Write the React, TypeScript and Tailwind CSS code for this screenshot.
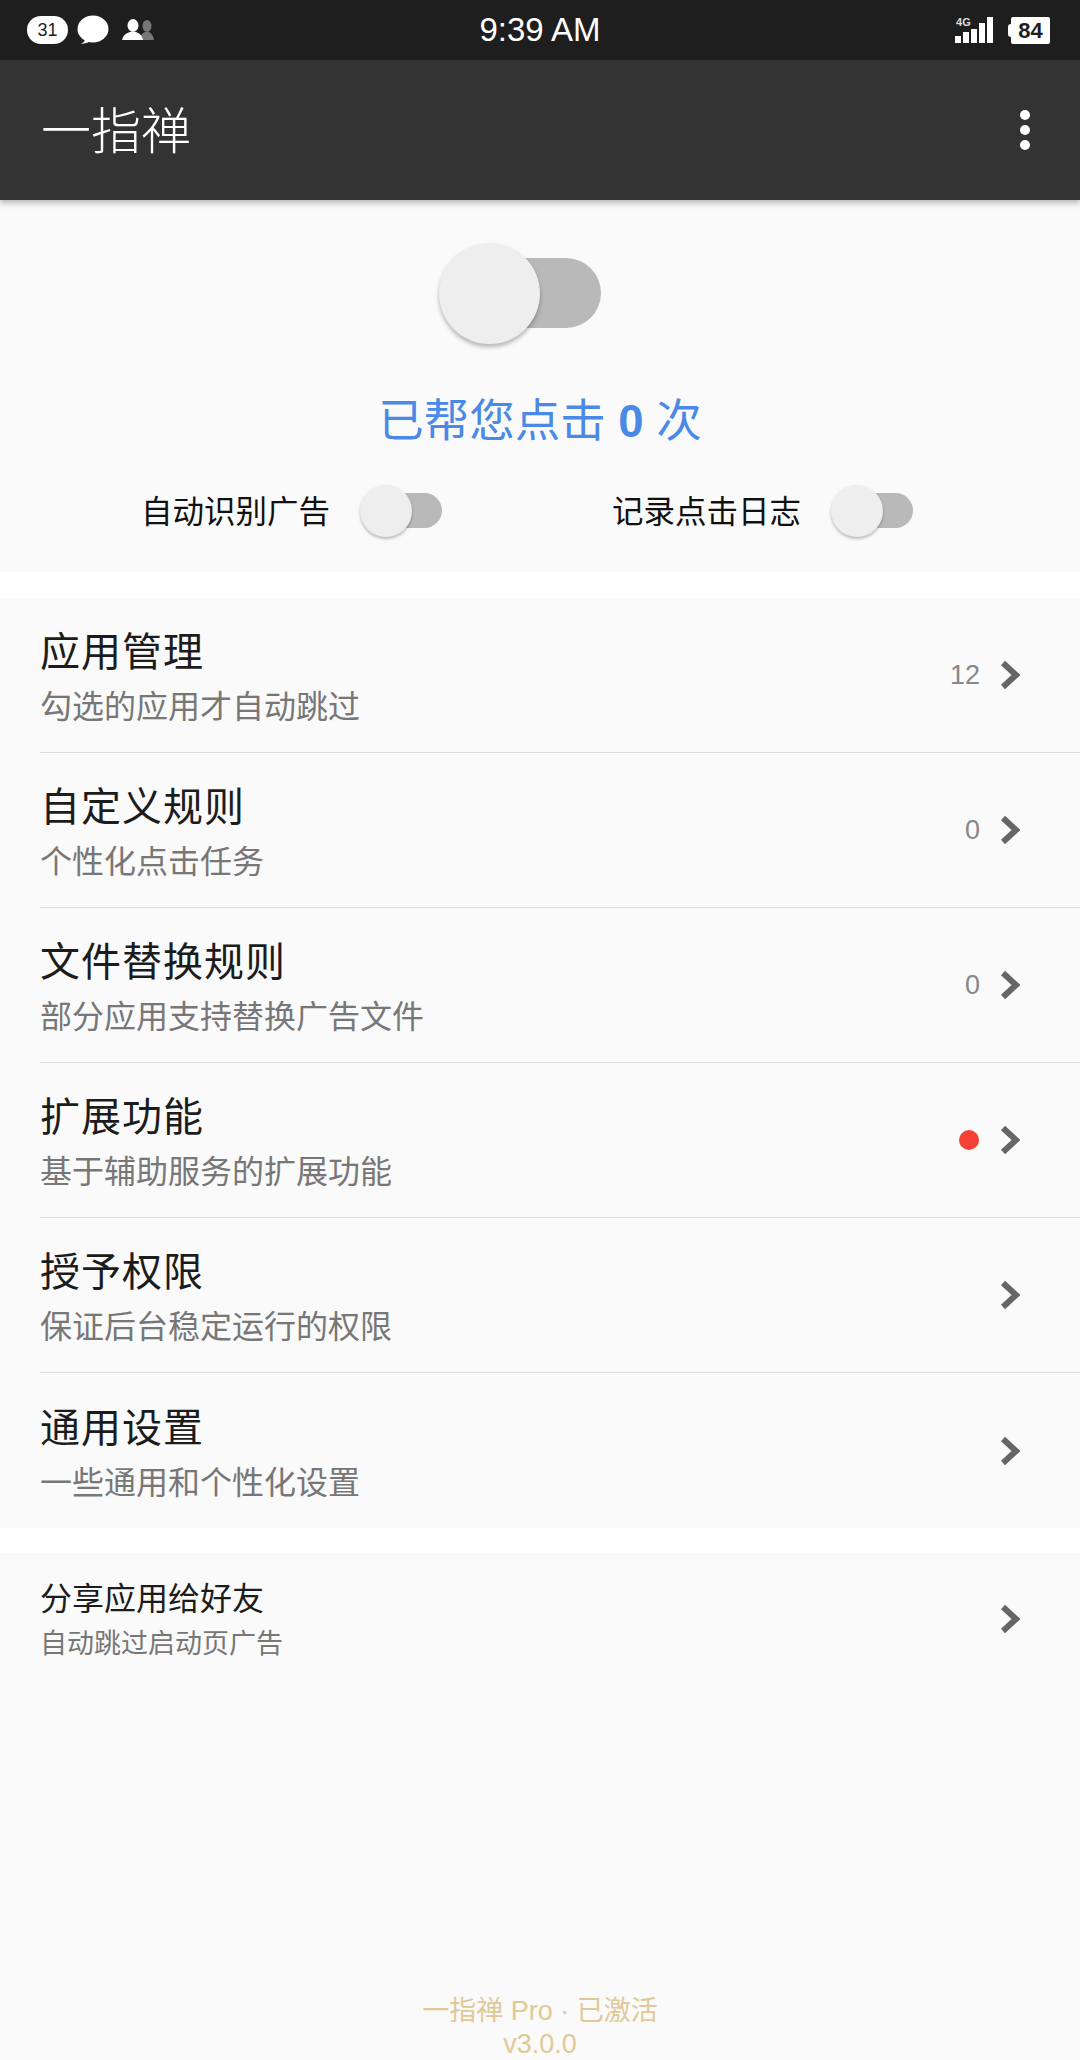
const FONT = "font-['Liberation_Sans','Noto_Sans_CJK_SC',sans-serif]";

const Chevron = () => (
  <svg width="20" height="30" viewBox="0 0 20 30" className="shrink-0">
    <path d="M3 3 L16 15 L3 27" fill="none" stroke="#666666" strokeWidth="6" />
  </svg>
);

const Toggle = ({ big }: { big?: boolean }) => (
  <div className={big ? "relative w-[121px] h-[70px] rounded-full bg-[#b9b9b9]" : "relative w-[60px] h-[35px] rounded-full bg-[#b9b9b9]"}>
    <div
      className={
        big
          ? "absolute -left-[41px] -top-[15px] w-[101px] h-[101px] rounded-full bg-[#eeeeee] shadow-[0_3px_4px_rgba(0,0,0,0.28)]"
          : "absolute -left-[22px] -top-[8px] w-[52px] h-[52px] rounded-full bg-[#eeeeee] shadow-[0_2px_3px_rgba(0,0,0,0.25)]"
      }
    />
  </div>
);

const StatusBar = () => (
  <div className="flex items-center h-[60px] bg-[#1e1e1e] px-[27px] text-white">
    <div className="flex-1 flex items-center">
      <div className="w-[41px] h-[28px] rounded-full bg-white text-[#1e1e1e] text-[18px] leading-[28px] text-center">31</div>
      <svg width="32" height="30" viewBox="0 0 32 30" className="ml-[9px]">
        <ellipse cx="16" cy="14" rx="15.5" ry="13.5" fill="#fff" />
        <path d="M4 29 Q8 27 9 22 L14 26 Q9 29 4 29 Z" fill="#fff" />
      </svg>
      <svg width="32" height="22" viewBox="0 0 32 22" className="ml-[13px]">
        <ellipse cx="25" cy="7" rx="4.5" ry="6" fill="#777" />
        <path d="M18 21 Q18 15 23 13 H27 Q31 15 32 21 Z" fill="#777" />
        <ellipse cx="11" cy="6.5" rx="5.5" ry="6.5" fill="#fff" />
        <path d="M0 21 Q1 15 8 13 H14 Q20 15 21 21 Z" fill="#fff" />
      </svg>
    </div>
    <div className="ml-[3px] text-[33px] leading-[40px] whitespace-nowrap">9:39 AM</div>
    <div className="flex-1 flex items-center justify-end pr-[3px]">
      <div className="relative w-[38px] h-[26px]">
        <span className="absolute top-[-1px] left-[1px] text-[11px] leading-[12px] font-bold text-[#dddddd]">4G</span>
        <div className="absolute inset-0 flex items-end gap-[2px]">
          <div className="w-[6px] h-[7px] bg-white" />
          <div className="w-[6px] h-[11px] bg-white" />
          <div className="w-[6px] h-[14px] bg-white" />
          <div className="w-[6px] h-[20px] bg-white" />
          <div className="w-[6px] h-[26px] bg-white" />
        </div>
      </div>
      <div className="w-[3px] h-[13px] rounded-l-sm bg-white ml-[15px]" />
      <div className="w-[39px] h-[27px] rounded-[2px] bg-white text-[#1e1e1e] text-[22px] leading-[27px] text-center font-bold">84</div>
    </div>
  </div>
);

const Row = ({ title, sub, value, dot }: { title: string; sub: string; value?: string; dot?: boolean }) => (
  <div className="ml-[40px] h-[155px] flex items-center pr-[60px] border-b border-[#dddddd] last:border-b-0">
    <div className="flex-1 pt-[7px]">
      <div className="text-[40px] leading-[48px] text-[#1c1c1c] tracking-[1px]">{title}</div>
      <div className="text-[32px] leading-[44px] mt-[9px] text-[#777777]">{sub}</div>
    </div>
    {value && <span className="text-[27px] font-light text-[#888888] mr-[20px]">{value}</span>}
    {dot && <span className="w-[20px] h-[20px] rounded-full bg-[#f44336] mr-[21px]" />}
    <Chevron />
  </div>
);

export default function App() {
  return (
    <div className={`${FONT} w-[1080px] h-[2060px] overflow-hidden bg-[#fafafa] flex flex-col`}>
      <div className="relative z-10 shadow-[0_3px_6px_rgba(0,0,0,0.28)]">
        <StatusBar />
        <div className="h-[140px] bg-[#333333] flex items-center justify-between pl-[41px] pr-[50px]">
          <h1 className="text-[50px] font-light text-white pt-[5px]">一指禅</h1>
          <div className="flex flex-col gap-[5px]">
            <span className="w-[10px] h-[10px] rounded-full bg-white" />
            <span className="w-[10px] h-[10px] rounded-full bg-white" />
            <span className="w-[10px] h-[10px] rounded-full bg-white" />
          </div>
        </div>
      </div>

      <div className="h-[372px] pt-[58px] flex flex-col items-center">
        <Toggle big />
        <div className="mt-[64px] text-[45.5px] leading-[60px] text-[#4a8ae6] whitespace-nowrap">
          已帮您点击 <span className="font-bold">0</span> 次
        </div>
        <div className="mt-[41px] w-full pl-[141px] flex items-center h-[35px] gap-[170px]">
          <div className="flex items-center gap-[52px]">
            <span className="text-[31.5px] text-[#111111] whitespace-nowrap pt-[5px]">自动识别广告</span>
            <Toggle />
          </div>
          <div className="flex items-center gap-[52px]">
            <span className="text-[31.5px] text-[#111111] whitespace-nowrap pt-[5px]">记录点击日志</span>
            <Toggle />
          </div>
        </div>
      </div>

      <div className="h-[26px] bg-white" />
      <div>
        <Row title="应用管理" sub="勾选的应用才自动跳过" value="12" />
        <Row title="自定义规则" sub="个性化点击任务" value="0" />
        <Row title="文件替换规则" sub="部分应用支持替换广告文件" value="0" />
        <Row title="扩展功能" sub="基于辅助服务的扩展功能" dot />
        <Row title="授予权限" sub="保证后台稳定运行的权限" />
        <Row title="通用设置" sub="一些通用和个性化设置" />
      </div>
      <div className="h-[25px] bg-white" />

      <div className="ml-[40px] h-[132px] flex items-center pr-[60px]">
        <div className="flex-1 pt-[3px]">
          <div className="text-[32px] leading-[40px] text-[#1c1c1c]">分享应用给好友</div>
          <div className="text-[27px] leading-[36px] mt-[7px] text-[#777777]">自动跳过启动页广告</div>
        </div>
        <Chevron />
      </div>

      <div className="mt-auto text-center text-[27px] leading-[33px] text-[#e0c997] -mb-[1px]">
        <div>一指禅 Pro · 已激活</div>
        <div>v3.0.0</div>
      </div>
    </div>
  );
}
